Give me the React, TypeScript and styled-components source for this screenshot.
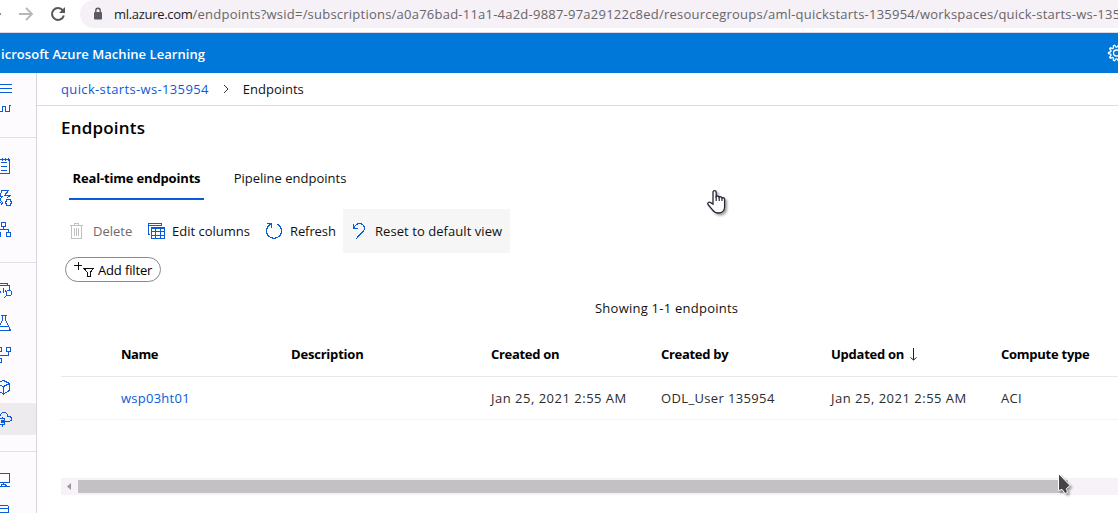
import React from "react";
import styled, { createGlobalStyle } from "styled-components";

const Global = createGlobalStyle`
  * { box-sizing: border-box; }
  html, body { margin: 0; padding: 0; overflow: hidden; background: #fff; }
  body { font-family: "Open Sans", "Noto Sans", sans-serif; font-size: 13px; color: #111; }
`;

const Page = styled.div`
  position: relative;
  display: flex;
  flex-direction: column;
  width: 1118px;
  height: 513px;
  overflow: hidden;
`;

const Text = styled.span<{ $ls?: number }>`
  letter-spacing: ${(p) => p.$ls ?? 0}px;
  white-space: pre;
`;

const BrowserBar = styled.div`
  display: flex;
  height: 33px;
  flex: none;
  border-bottom: 1px solid #dcdae0;
`;

const NavIcons = styled.svg`
  display: block;
  flex: none;
  width: 80px;
  height: 28px;
`;

const AddressBar = styled.div`
  display: flex;
  align-items: center;
  flex: 1;
  height: 28px;
  padding-left: 13px;
  border-radius: 14px 0 0 14px;
  background: #f5f1f6;
  overflow: hidden;
  color: #68656a;
  svg { flex: none; margin-right: 11px; }
`;

const Host = styled(Text)`
  color: #1d1c1f;
`;

const AppHeader = styled.header`
  display: flex;
  align-items: center;
  justify-content: space-between;
  height: 40px;
  flex: none;
  background: #0078d9;
  color: #fff;
  font-weight: 600;
  overflow: hidden;
`;

const Product = styled(Text)`
  padding: 2px 0 0 1px;
`;

const Body = styled.div`
  display: flex;
  flex: 1;
  min-height: 0;
`;

const Sidebar = styled.nav`
  width: 37px;
  flex: none;
  overflow: hidden;
  background: #fefbff;
  border-right: 1px solid #d8d4d9;
`;

const NavGroup = styled.div<{ $top?: boolean }>`
  padding: ${(p) => (p.$top ? "0 0 21px" : "12px 0 16px")};
  border-bottom: 1px solid #e2dfe4;
`;

const NavItem = styled.div<{ $h?: number; $active?: boolean }>`
  height: ${(p) => p.$h ?? 32}px;
  border-radius: 0 2px 2px 0;
  background: ${(p) => (p.$active ? "#eeebef" : "transparent")};
  svg {
    display: block;
    fill: none;
    stroke: #0a5bd8;
    stroke-width: 1;
    shape-rendering: crispEdges;
  }
`;

const Main = styled.main`
  flex: 1;
  min-width: 0;
  display: flex;
  flex-direction: column;
`;

const Breadcrumb = styled.div`
  display: flex;
  align-items: center;
  height: 33px;
  padding-left: 24px;
  border-bottom: 1px solid #dcdade;
  svg { margin: 0 13px 0 13px; }
`;

const Link = styled(Text)`
  color: #0a5bd8;
`;

const Title = styled.h1`
  margin: 0;
  height: 44px;
  padding-left: 24px;
  font-size: 17px;
  line-height: 44px;
  font-weight: 600;
  color: #000;
`;

const Tabs = styled.div`
  display: flex;
  height: 50px;
  padding: 6px 0 0 32px;
  gap: 26px;
`;

const Tab = styled.div<{ $active?: boolean; $w: number }>`
  display: flex;
  justify-content: center;
  width: ${(p) => p.$w}px;
  height: 44px;
  line-height: 44px;
  font-weight: ${(p) => (p.$active ? 700 : 400)};
  color: ${(p) => (p.$active ? "#000" : "#111")};
  border-bottom: 2px solid ${(p) => (p.$active ? "#0a5bd8" : "transparent")};
`;

const Toolbar = styled.div`
  display: flex;
  height: 44px;
  margin-top: 9px;
  padding-left: 24px;
`;

const ToolButton = styled.div<{ $w: number; $disabled?: boolean; $filled?: boolean }>`
  display: flex;
  align-items: center;
  width: ${(p) => p.$w}px;
  padding-left: 8px;
  background: ${(p) => (p.$filled ? "#f6f6f6" : "transparent")};
  color: ${(p) => (p.$disabled ? "#6c6c6c" : "#111")};
  svg { flex: none; margin-right: 7px; shape-rendering: crispEdges; }
`;

const FilterPill = styled.div`
  display: flex;
  align-items: center;
  width: 96px;
  height: 25px;
  margin: 4px 0 0 28px;
  padding-left: 8px;
  border: 1px solid #8a888c;
  border-radius: 13px;
  color: #000;
  svg { flex: none; margin-right: 2px; shape-rendering: crispEdges; }
`;

const Count = styled.div`
  height: 50px;
  line-height: 52px;
  padding-left: 558px;
  color: #111;
`;

const Row = styled.div<{ $head?: boolean }>`
  display: grid;
  grid-template-columns: 170px 200px 170px 170px 170px 170px;
  align-items: center;
  height: ${(p) => (p.$head ? 45 : 43)}px;
  margin-left: 24px;
  padding-left: 60px;
  border-bottom: 1px solid ${(p) => (p.$head ? "#e9e8e9" : "#f4f3f4")};
  font-weight: ${(p) => (p.$head ? 700 : 400)};
  color: ${(p) => (p.$head ? "#000" : "#2c2c2c")};
`;

const SortCell = styled.span`
  display: flex;
  align-items: center;
  gap: 6px;
`;

const ScrollTrack = styled.div`
  display: flex;
  align-items: center;
  height: 17px;
  margin: 58px 0 0 24px;
  background: #f6f2f7;
`;

const ScrollThumb = styled.div`
  width: 990px;
  height: 13px;
  background: #c4c1c5;
`;

const Pointer = styled.svg<{ $x: number; $y: number }>`
  position: absolute;
  left: ${(p) => p.$x}px;
  top: ${(p) => p.$y}px;
  filter: drop-shadow(2px 2px 1px rgba(0, 0, 0, 0.35));
`;

const gearPath = (cx: number, cy: number, r: number, teeth: number) => {
  const pts: string[] = [];
  for (let i = 0; i < teeth * 4; i++) {
    const a = ((i - 0.5) / (teeth * 4)) * Math.PI * 2;
    const rad = i % 4 < 2 ? r : r * 0.74;
    pts.push(`${(cx + rad * Math.cos(a)).toFixed(2)} ${(cy + rad * Math.sin(a)).toFixed(2)}`);
  }
  return `M${pts.join("L")}Z`;
};

const Glyph = ({ h = 32, children }: { h?: number; children: React.ReactNode }) => (
  <svg width="36" height={h} viewBox={`0 0 36 ${h}`}>{children}</svg>
);

const columns: [string, number][] = [
  ["Name", -0.45],
  ["Description", -0.2],
  ["Created on", -0.3],
  ["Created by", -0.3],
  ["Updated on", -0.25],
  ["Compute type", -0.25],
];

export default function App() {
  return (
    <Page>
      <Global />
      <BrowserBar>
        <NavIcons viewBox="0 0 80 28" fill="none">
          <path d="M0 14H1" stroke="#5f6368" strokeWidth="1.6" />
          <path d="M19 14H32M26 8L32 14L26 20" stroke="#b8b6ba" strokeWidth="1.8" />
          <path d="M62.8 10.3A6 6 0 1 0 63.8 15.5" stroke="#56565b" strokeWidth="2" />
          <path d="M65 7V13H59Z" fill="#56565b" />
        </NavIcons>
        <AddressBar>
          <svg width="10" height="14" viewBox="0 0 10 14" fill="none">
            <rect x="1" y="5" width="8" height="7.5" rx="1" fill="#5b595e" />
            <path d="M2.8 5.5V3.4A2.2 2.2 0 0 1 7.2 3.4V5.5" stroke="#5b595e" strokeWidth="1.4" />
          </svg>
          <Host $ls={-0.3}>ml.azure.com</Host>
          <Text $ls={0.23}>/endpoints?wsid=/subscriptions/a0a76bad-11a1-4a2d-9887-97a29122c8ed/resourcegroups/aml-quickstarts-135954/workspaces/quick-starts-ws-135</Text>
        </AddressBar>
      </BrowserBar>
      <AppHeader>
        <Product $ls={0.04}>icrosoft Azure Machine Learning</Product>
        <svg width="11" height="18" viewBox="0 0 11 18" fill="none" stroke="#fff">
          <path d={gearPath(9.5, 9, 8, 10)} strokeWidth="1.3" />
          <circle cx="9.5" cy="9" r="3" strokeWidth="1.3" />
        </svg>
      </AppHeader>
      <Body>
        <Sidebar>
          <NavGroup $top>
            <NavItem $h={27}>
              <Glyph h={27}><path d="M0 11.5H12M0 15.5H12M0 19.5H12" /></Glyph>
            </NavItem>
            <NavItem $h={16}>
              <Glyph h={16}><path d="M0 11.5H2.5V6.5H5.5V11.5H9.5V5.5H11" /></Glyph>
            </NavItem>
          </NavGroup>
          <NavGroup>
            <NavItem>
              <Glyph><path d="M0 9.5H9.5V23.5H0M1 12.5H7M1 16.5H7M1 20.5H7M2.5 8V11M5.5 8V11M8.5 8V11" /></Glyph>
            </NavItem>
            <NavItem>
              <Glyph>
                <path d="M2 8.5H8.5L4.5 13.5H10L7 16M2 8.5L0 13.5M0 14.5H2L0 18" />
                <path d={gearPath(8.5, 20.5, 3.5, 6)} />
                <path d="M0 18L1.5 19.5L0 21M1 22.5L3 20.5" />
              </Glyph>
            </NavItem>
            <NavItem>
              <Glyph><path d="M1.5 8.5H5.5V12.5H1.5ZM3.5 12.5V15.5M0 15.5H8.5V18.5M6.5 18.5H10.5V22.5H6.5ZM0 18.5H0.5V22.5H0" /></Glyph>
            </NavItem>
          </NavGroup>
          <NavGroup>
            <NavItem>
              <Glyph>
                <path d="M0 8.5H7.5V10.5H9.5V15M0 10.5H7.5M0.5 16V18M3.5 13V18M5.5 15V17" />
                <path d="M7.5 15.5H10.5L11.5 16.5V19.5L10.5 20.5H7.5L6.5 19.5V16.5ZM7 20L3.5 23.5" />
              </Glyph>
            </NavItem>
            <NavItem>
              <Glyph><path d="M1 8.5H7M2.5 8.5V13L0 18M5.5 8.5V13L10.5 23.5H0M0 19.5H8.5" /></Glyph>
            </NavItem>
            <NavItem>
              <Glyph><path d="M6.5 8.5H10.5V12.5H6.5ZM8.5 12.5V16.5H0M0 19.5H1.5V23.5H0M0 8.5H1.5V12.5H0" /></Glyph>
            </NavItem>
            <NavItem>
              <Glyph><path d="M0 11L3.5 9.5L9.5 12.5V19.5L3.5 23L0 21M0 14L3.5 15.5L9.5 12.5M3.5 15.5V23" /></Glyph>
            </NavItem>
            <NavItem $active>
              <Glyph>
                <path d="M0 12.5C1.5 8.5 7 8.5 7.8 13C10.5 13 11.5 15 11.5 16.2C11.5 18 10 18.5 7 18.5" />
                <path d="M0 15.5H4.5V21.5H0M4.5 18.5H6.5M2.5 13.5V15.5M2.5 21.5V23.5" />
                <rect x="1" y="17" width="3" height="3" fill="#0a5bd8" stroke="none" />
              </Glyph>
            </NavItem>
          </NavGroup>
          <NavGroup>
            <NavItem>
              <Glyph><path d="M0 9.5H9.5V18.5H0M3.5 18.5V21M0 22.5H9.5M1 22L2 20.5H5L6.5 22" /></Glyph>
            </NavItem>
            <NavItem>
              <Glyph><path d="M0 9.5H7L8.5 10.5V24M0 12.5H7L8.5 11.5M0 16.5H7L8.5 15.5" /></Glyph>
            </NavItem>
          </NavGroup>
        </Sidebar>
        <Main>
          <Breadcrumb>
            <Link $ls={0.36}>quick-starts-ws-135954</Link>
            <svg width="8" height="10" viewBox="0 0 8 10" fill="none" stroke="#333">
              <path d="M2 1L6 5L2 9" />
            </svg>
            <Text>Endpoints</Text>
          </Breadcrumb>
          <Title><Text $ls={0.2}>Endpoints</Text></Title>
          <Tabs>
            <Tab $active $w={135}><Text $ls={-0.17}>Real-time endpoints</Text></Tab>
            <Tab $w={120}><Text>Pipeline endpoints</Text></Tab>
          </Tabs>
          <Toolbar>
            <ToolButton $w={79} $disabled>
              <svg width="17" height="18" viewBox="0 0 17 18" fill="none" stroke="#c2c2c2">
                <path d="M1 3.5H14M5.5 3V1.5H9.5V3M2.5 3.5V16.5H12.5V3.5M5.5 6V14M7.5 6V14M9.5 6V14" />
              </svg>
              <Text>Delete</Text>
            </ToolButton>
            <ToolButton $w={117}>
              <svg width="17" height="18" viewBox="0 0 17 18" fill="none" stroke="#0a5bd8">
                <path d="M2 12.5H.5V1.5H13.5V4M.5 3.5H13.5M3.5 5.5H16.5V16.5H3.5ZM3.5 6.5H16.5M3.5 9.5H16.5M3.5 13.5H16.5M7.5 7V17M12.5 7V17" />
              </svg>
              <Text>Edit columns</Text>
            </ToolButton>
            <ToolButton $w={86}>
              <svg width="18" height="18" viewBox="0 0 18 18" fill="none" stroke="#0a5bd8">
                <path d="M5.5 2.2A7.5 7.5 0 1 0 12.5 2.2M2 1.5H6.5V5.5" strokeWidth="1.3" />
              </svg>
              <Text $ls={-0.1}>Refresh</Text>
            </ToolButton>
            <ToolButton $w={167} $filled>
              <svg width="17" height="18" viewBox="0 0 17 18" fill="none" stroke="#0a5bd8">
                <path d="M2.5 2V6.5H7M2.5 6C5.5 1.5 9 1 11.5 2.5C14 4.5 13.8 7.8 12 9.5L5 17" strokeWidth="1.2" />
              </svg>
              <Text $ls={0.06}>Reset to default view</Text>
            </ToolButton>
          </Toolbar>
          <FilterPill>
            <svg width="22" height="20" viewBox="0 0 22 20" fill="none" stroke="#111">
              <path d="M0 5.5H8M4.5 1.5V9.5M10 8.5H19.5L16 12.5V16.5H13.5V12.5Z" />
            </svg>
            <Text $ls={-0.15}>Add filter</Text>
          </FilterPill>
          <Count><Text $ls={0.24}>Showing 1-1 endpoints</Text></Count>
          <Row $head>
            {columns.map(([name, ls]) => (
              <SortCell key={name}>
                <Text $ls={ls}>{name}</Text>
                {name === "Updated on" && (
                  <svg width="7" height="13" viewBox="0 0 7 13" fill="none" stroke="#222">
                    <path d="M3.5 0V12M.5 9.5L3.5 12L6.5 9.5" />
                  </svg>
                )}
              </SortCell>
            ))}
          </Row>
          <Row>
            <Link $ls={0.25}>wsp03ht01</Link>
            <span />
            <Text $ls={0.5}>Jan 25, 2021 2:55 AM</Text>
            <Text $ls={0.36}>ODL_User 135954</Text>
            <Text $ls={0.5}>Jan 25, 2021 2:55 AM</Text>
            <Text $ls={0.3}>ACI</Text>
          </Row>
          <ScrollTrack>
            <svg width="17" height="17" viewBox="0 0 17 17"><path d="M10 5V12L6 8.5Z" fill="#9b989c" /></svg>
            <ScrollThumb />
          </ScrollTrack>
        </Main>
      </Body>
      <Pointer $x={706} $y={189} width="22" height="26" viewBox="0 0 22 26">
        <path d="M7 15V3.2C7 1 10.2 1 10.2 3.2V7.5C11 6.6 13 7 13.2 8.2C14 7.4 15.8 7.8 16 9C17 8.3 18.6 9 18.6 10.5V18C18.6 21.5 16 24 12.5 24C9.5 24 8 23 6.5 20.8L2 15.5C1 13.8 3 12.4 4.6 13.6Z" fill="#fff" stroke="#26263a" strokeWidth="1.3" />
        <path d="M10.2 7V12M13.2 8V12M16 9V12" stroke="#26263a" strokeWidth="1.2" />
      </Pointer>
      <Pointer $x={1057} $y={472} width="16" height="24" viewBox="0 0 16 24">
        <path d="M1.5 1.5V18.5L5.2 17.5L8 21.5L10.5 20.5L9.5 16.5L13 13.5Z" fill="#454346" stroke="#fff" />
      </Pointer>
    </Page>
  );
}
